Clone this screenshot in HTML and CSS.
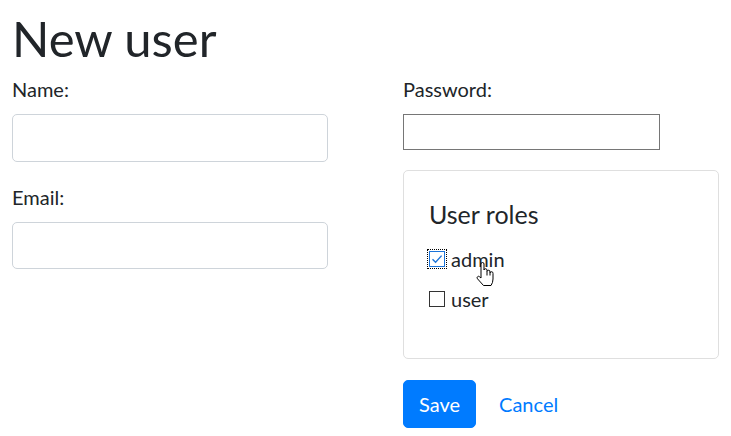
FILE: index.html
```html
<!DOCTYPE html>
<html lang="en">
<head>
<meta charset="utf-8">
<title>New user</title>
<link rel="stylesheet" href="styles.css">
</head>
<body>
<div class="page">
  <h1 class="title">New user</h1>
  <div class="cols">
    <div class="col">
      <div class="group">
        <label class="label">Name:</label>
        <input class="form-control" type="text">
      </div>
      <div class="group">
        <label class="label">Email:</label>
        <input class="form-control" type="text">
      </div>
    </div>
    <div class="col">
      <div class="group">
        <label class="label">Password:</label>
        <input class="plain-input" type="password">
      </div>
      <div class="card">
        <h5 class="card-title">User roles</h5>
        <div class="checks">
          <div class="check-row">
            <span class="box box-checked">
              <svg viewBox="0 0 14 14" width="14" height="14"><path d="M2.5 7.2 L5.6 10.2 L11.6 3.6" fill="none" stroke="#1a73d9" stroke-width="1.4"/></svg>
            </span>
            <span class="check-label">admin</span>
            <svg class="cursor" viewBox="0 0 20 25" width="20" height="25"><path d="M6,15 V2 A1.5,1.5 0 0 1 9,2 V8 A1.5,1.5 0 0 1 12,8.5 V9.5 A1.5,1.5 0 0 1 15,10 V11 A1.5,1.5 0 0 1 18,11.5 V17 Q18,20.5 16,23.5 H8.5 L2.5,16.8 A1.4,1.4 0 0 1 4.6,14.8 L6,16 Z M12,9.5 V13.5 M15,11 V13.5" fill="#fff" stroke="#000" stroke-width="1"/></svg>
          </div>
          <div class="check-row">
            <span class="box"></span>
            <span class="check-label">user</span>
          </div>
        </div>
      </div>
      <div class="actions">
        <button class="btn btn-primary" type="button">Save</button>
        <a class="btn btn-link" href="#">Cancel</a>
      </div>
    </div>
  </div>
</div>
</body>
</html>
```

FILE: styles.css
```css
* { box-sizing: border-box; }

html, body {
  margin: 0;
  padding: 0;
  background: #fff;
}

body {
  font-family: "Lato", "Liberation Sans", sans-serif;
  font-size: 20px;
  line-height: 30px;
  color: #212529;
}

.page {
  padding: 8px 12px 0 12px;
}

.title {
  margin: 0 0 6px 0;
  font-size: 49px;
  line-height: 60px;
  font-weight: 400;
  color: #212529;
}

.cols {
  display: grid;
  grid-template-columns: 316px 316px;
  column-gap: 75px;
  align-items: start;
}

.col {
  display: flex;
  flex-direction: column;
}

.group {
  display: flex;
  flex-direction: column;
  margin-bottom: 20px;
}

.label {
  display: block;
  line-height: 30px;
  margin-bottom: 10px;
}

.form-control {
  display: block;
  width: 316px;
  height: 47.5px;
  margin: 0;
  padding: 7.5px 15px;
  border: 1px solid #ced4da;
  border-radius: 5px;
  background: #fff;
  font: inherit;
  outline: none;
}

.plain-input {
  display: block;
  width: 257px;
  height: 36px;
  margin: 0;
  padding: 1px 2px;
  border: 1px solid #767676;
  border-radius: 0;
  background: #fff;
  font: inherit;
  outline: none;
}

.card {
  width: 316px;
  border: 1px solid #dfdfdf;
  border-radius: 5px;
  padding: 28px 25px 25px 25px;
  background: #fff;
}

.card-title {
  margin: 0 0 15px 0;
  font-size: 25px;
  line-height: 30px;
  font-weight: 400;
}

.checks {
  display: flex;
  flex-direction: column;
  gap: 10px;
  margin-bottom: 19px;
}

.check-row {
  position: relative;
  display: flex;
  align-items: flex-start;
  line-height: 30px;
}

.box {
  width: 16px;
  height: 16px;
  margin-top: 7px;
  margin-right: 6px;
  border: 1px solid #333;
  background: #fff;
  display: flex;
  align-items: center;
  justify-content: center;
  flex: none;
}

.box-checked {
  border-color: #1a73d9;
  outline: 1px dotted #000;
  outline-offset: 1px;
}

.box svg {
  display: block;
}

.cursor {
  position: absolute;
  left: 46px;
  top: 18px;
}

.actions {
  display: flex;
  align-items: center;
  gap: 7px;
  margin-top: 21px;
}

.btn {
  display: inline-block;
  font: inherit;
  font-size: 20px;
  line-height: 30px;
  padding: 8px 15px;
  border: 1px solid transparent;
  border-radius: 5px;
  text-decoration: none;
  cursor: pointer;
}

.btn-primary {
  background: #007bff;
  border-color: #007bff;
  color: #fff;
}

.btn-link {
  background: transparent;
  color: #007bff;
}
```
